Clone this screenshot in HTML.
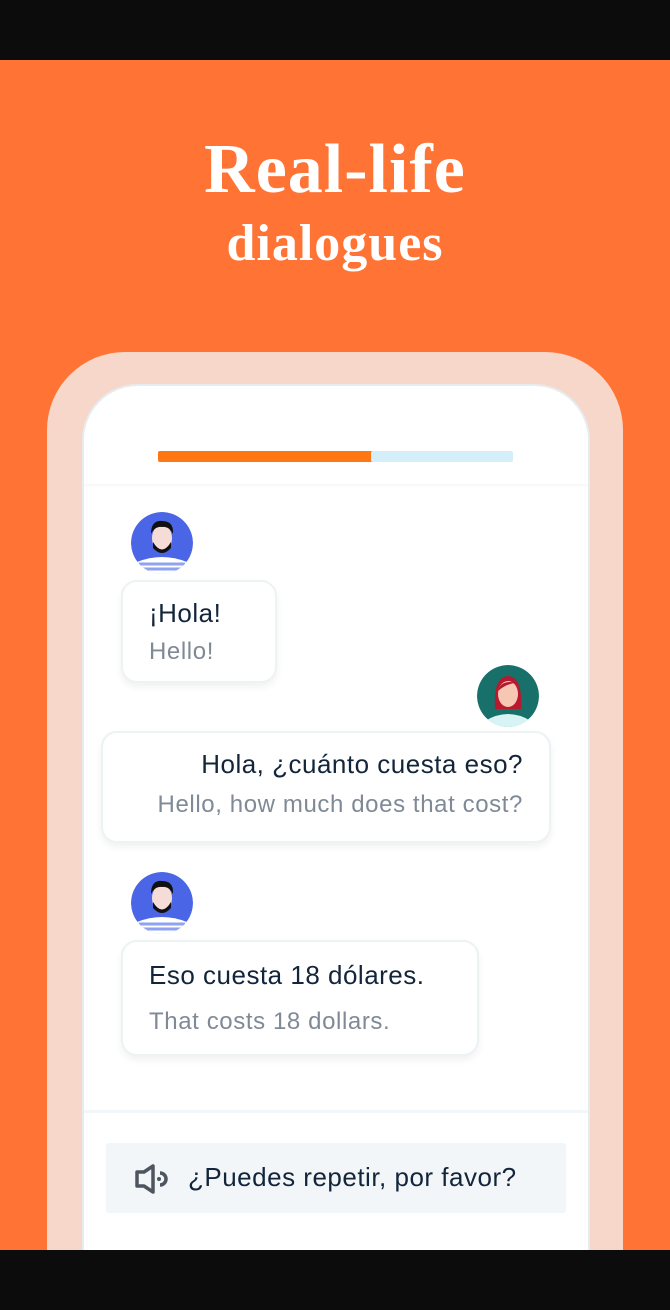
<!DOCTYPE html>
<html><head><meta charset="utf-8"><style>
*{margin:0;padding:0;box-sizing:border-box}
body{width:670px;height:1310px;background:#0c0c0c;position:relative;overflow:hidden;font-family:"Liberation Sans",sans-serif}
.bg{position:absolute;left:0;top:60px;width:670px;height:1190px;background:#ff7335;overflow:hidden}
h1{position:absolute;left:0;width:670px;text-align:center;color:#fff;font-family:"Liberation Serif",serif;font-weight:bold}
.frame{position:absolute;left:47px;top:292px;width:576px;height:1000px;background:#f6d7ca;border-radius:78px}
.screen{position:absolute;left:82px;top:324px;width:508px;height:1000px;background:#fff;border-radius:56px;border:2px solid #e6ecef;overflow:hidden}
.bar{position:absolute;top:65px;height:11px;border-radius:2px}
.hd{position:absolute;left:0;top:98px;width:100%;height:4px;background:linear-gradient(#f4f6f8,#fff)}
.b{position:absolute;background:#fff;border:2px solid #edf2f4;border-radius:16px;box-shadow:0 4px 8px rgba(0,0,0,.06)}
.t1{color:#12253a;font-size:26px;position:absolute;letter-spacing:0.5px;white-space:nowrap}
.t2{color:#7f8a96;font-size:24px;position:absolute;letter-spacing:0.6px;white-space:nowrap}
.av{position:absolute;width:62px;height:62px;border-radius:50%;overflow:hidden}
.foot{position:absolute;left:0;top:724px;width:100%;height:300px;background:#fff;border-top:3px solid #f3f6f8}
.btn{position:absolute;left:22px;top:30px;width:460px;height:70px;background:#f3f6f9;border-radius:3px}
</style></head><body>
<div class="bg">
<h1 style="top:70px;font-size:70px;letter-spacing:1px">Real-life</h1>
<h1 style="top:154px;font-size:52px;letter-spacing:1px">dialogues</h1>
<div class="frame"></div>
<div class="screen">
 <div class="bar" style="left:74px;width:215px;background:#ff7712"></div>
 <div class="bar" style="left:287px;width:142px;background:#d4eefa"></div>
 <div class="hd"></div>
 <div class="av" style="left:47px;top:126px"><svg width="62" height="62"><circle cx="31" cy="31" r="31" fill="#4a66e6"/><path d="M6 50 Q31 40 56 50 L56 62 L6 62Z" fill="#fff"/><path d="M8 52h46M10 57h42" stroke="#8fa3f0" stroke-width="3"/><ellipse cx="31" cy="26" rx="10" ry="13" fill="#f6dcd6"/><path d="M20 22 Q20 8 31 9 Q43 9 42 22 Q38 14 31 15 Q24 14 20 22Z" fill="#111"/><path d="M22 30 Q31 45 40 30 L40 36 Q31 46 22 36Z" fill="#111"/></svg></div>
 <div class="b" style="left:37px;top:194px;width:156px;height:103px"><div class="t1" style="left:26px;top:16px">¡Hola!</div><div class="t2" style="left:26px;top:56px">Hello!</div></div>
 <div class="av" style="left:393px;top:279px"><svg width="62" height="62"><circle cx="31" cy="31" r="31" fill="#17706a"/><path d="M8 56 Q31 42 54 56 L54 62 L8 62Z" fill="#d8f3f3"/><path d="M18 44 Q16 12 31 11 Q46 12 44 44Z" fill="#b7192e"/><ellipse cx="31" cy="29" rx="10" ry="13" fill="#f6c7b3"/><path d="M21 26 Q24 14 40 18 Q30 18 21 26Z" fill="#b7192e"/></svg></div>
 <div class="b" style="left:17px;top:345px;width:450px;height:112px"><div class="t1" style="right:26px;top:16px">Hola, ¿cuánto cuesta eso?</div><div class="t2" style="right:26px;top:58px">Hello, how much does that cost?</div></div>
 <div class="av" style="left:47px;top:486px"><svg width="62" height="62"><circle cx="31" cy="31" r="31" fill="#4a66e6"/><path d="M6 50 Q31 40 56 50 L56 62 L6 62Z" fill="#fff"/><path d="M8 52h46M10 57h42" stroke="#8fa3f0" stroke-width="3"/><ellipse cx="31" cy="26" rx="10" ry="13" fill="#f6dcd6"/><path d="M20 22 Q20 8 31 9 Q43 9 42 22 Q38 14 31 15 Q24 14 20 22Z" fill="#111"/><path d="M22 30 Q31 45 40 30 L40 36 Q31 46 22 36Z" fill="#111"/></svg></div>
 <div class="b" style="left:37px;top:554px;width:358px;height:116px"><div class="t1" style="left:26px;top:18px">Eso cuesta 18 dólares.</div><div class="t2" style="left:26px;top:66px">That costs 18 dollars.</div></div>
 <div class="foot"><div class="btn">
  <svg style="position:absolute;left:28px;top:20px" width="40" height="32" viewBox="0 0 40 32"><path d="M3 9h7l9-6v26l-9-6H3Z" fill="none" stroke="#4d5560" stroke-width="3.5" stroke-linejoin="round"/><path d="M26 10a6 6 0 0 1 0 12" fill="none" stroke="#4d5560" stroke-width="3.5"/><circle cx="25" cy="16" r="2" fill="#4d5560"/></svg>
  <div class="t1" style="left:82px;top:19px;font-size:26px">¿Puedes repetir, por favor?</div>
 </div></div>
</div>
</div>
</body></html>
